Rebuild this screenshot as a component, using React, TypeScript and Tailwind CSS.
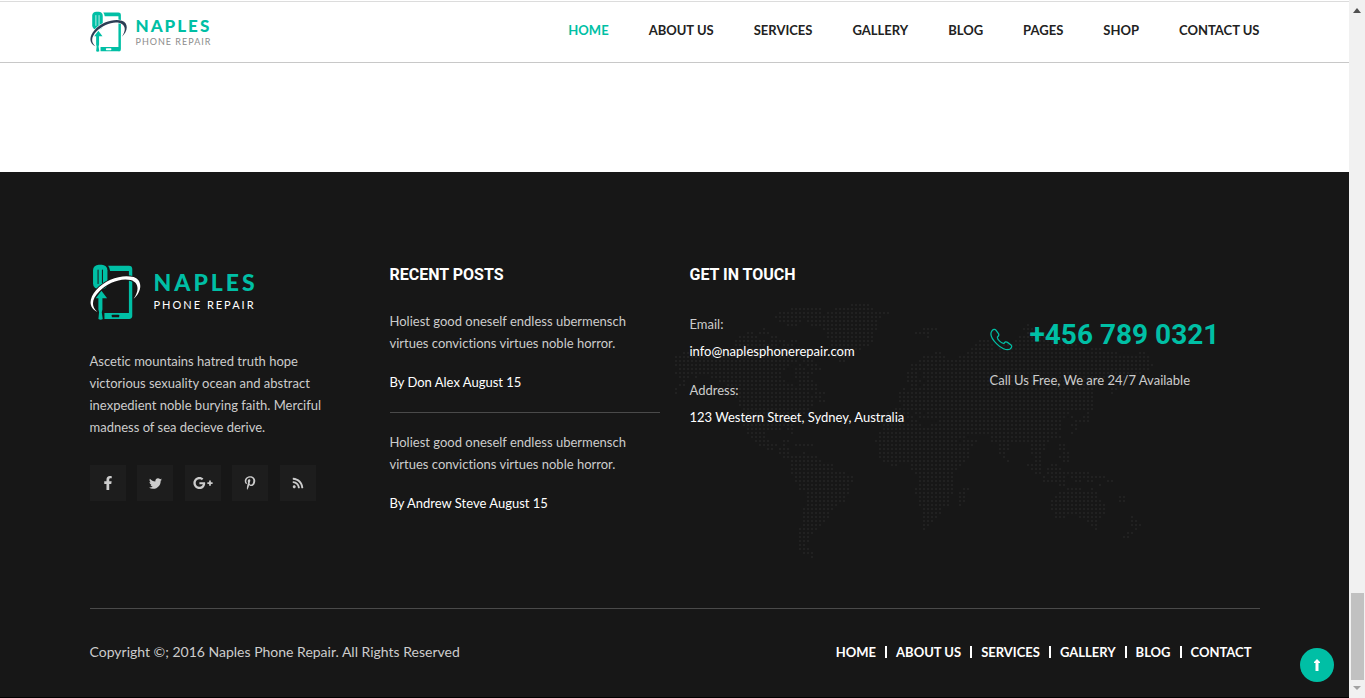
import { FaFacebookF, FaGooglePlusG, FaPinterestP, FaRss, FaTwitter } from "react-icons/fa";

const NAV = ["HOME", "ABOUT US", "SERVICES", "GALLERY", "BLOG", "PAGES", "SHOP", "CONTACT US"];
const FOOTER_NAV = ["HOME", "ABOUT US", "SERVICES", "GALLERY", "BLOG", "CONTACT"];

const POSTS = [
  { text: "Holiest good oneself endless ubermensch virtues convictions virtues noble horror.", by: "By Don Alex August 15" },
  { text: "Holiest good oneself endless ubermensch virtues convictions virtues noble horror.", by: "By Andrew Steve August 15" },
];

const SOCIAL = [
  { label: "Facebook", Icon: FaFacebookF, size: 14 },
  { label: "Twitter", Icon: FaTwitter, size: 13 },
  { label: "Google Plus", Icon: FaGooglePlusG, size: 20 },
  { label: "Pinterest", Icon: FaPinterestP, size: 14 },
  { label: "RSS", Icon: FaRss, size: 12 },
];

// Dotted world map: each row lists the filled column runs as "from-to".
const MAP_ROWS = [
  "44-48",
  "29-36 40-49",
  "26-36 38-53",
  "25-35 36-51",
  "26-31 33-50",
  "28-30 34-50 88-88",
  "22-22 37-50 62-65 87-90",
  "18-19 21-23 38-49 60-63 88-92",
  "16-20 24-25 38-49 63-63 86-94",
  "15-22 24-27 29-30 39-49 76-78 85-97",
  "15-25 27-29 39-48 75-79 82-100",
  "15-31 40-46 74-79 81-102 104-106",
  "2-3 8-28 30-34 40-44 65-66 73-110 116-117",
  "0-29 31-32 40-43 62-67 71-118",
  "0-30 32-34 41-42 61-118",
  "0-28 31-31 33-35 59-119",
  "1-27 30-32 34-36 59-118",
  "0-26 30-34 58-60 62-116",
  "1-3 5-5 9-26 30-33 58-60 62-108 112-113",
  "2-2 11-27 31-34 58-61 63-106 111-112",
  "1-2 13-29 31-35 59-60 62-105 110-111",
  "0-0 14-35 57-57 59-104 109-110",
  "0-0 15-33 35-37 56-104 109-109",
  "15-36 56-104",
  "16-34 36-37 56-104",
  "16-34 57-104",
  "17-33 55-104",
  "17-32 53-58 60-61 63-98 103-103",
  "17-31 53-56 58-59 61-97 99-99 102-103",
  "17-30 52-57 59-60 66-96 100-103",
  "17-29 52-61 64-96 99-100",
  "18-26 28-29 52-96 100-100",
  "18-22 29-29 51-95 99-99",
  "19-22 51-72 79-96",
  "20-23 27-28 50-70 72-75 79-93",
  "21-25 27-27 30-34 51-74 81-83 89-92 96-97",
  "23-24 26-28 51-73 81-83 89-92 96-97",
  "26-28 32-32 51-73 81-82 89-91 97-98",
  "27-35 51-73 82-82 90-91 96-98",
  "29-36 52-72 83-83 90-91 97-98",
  "29-39 54-55 59-71 88-91 94-95",
  "29-39 59-70 89-91 93-96",
  "29-42 60-69 90-91 93-103",
  "30-44 61-69 92-92 94-97 99-107",
  "30-44 61-69 92-97 100-101 103-104 108-109",
  "31-43 61-69 96-97 106-106",
  "31-43 60-69 72-73 98-101 104-104",
  "33-43 60-69 71-72 96-105",
  "33-42 61-68 71-72 95-105 111-112",
  "33-42 61-68 71-72 94-106 111-112",
  "33-40 61-68 71-71 94-107",
  "32-39 62-66 94-107",
  "32-38 62-66 95-107",
  "32-38 62-65 95-97 101-106 114-114",
  "32-37 62-64 103-105 114-115",
  "32-36 62-63 104-105 114-116",
  "31-35 62-62 105-105 115-115",
  "31-34 113-114",
  "31-33 112-113",
  "31-33",
  "31-32",
  "31-33",
  "32-34",
  "34-34",
];

function dotPath(row: string, y: number) {
  return row
    .split(" ")
    .map((run) => {
      const [from, to] = run.split("-").map(Number);
      let d = "";
      for (let k = from; k <= to; k++) d += `M${k * 4 + 1} ${y * 4 + 1}h2v2h-2z`;
      return d;
    })
    .join("");
}

function WorldMap() {
  return (
    <svg className="pointer-events-none absolute top-[39px] -left-4" width="484" height="256" viewBox="0 0 484 256" fill="#212121" shapeRendering="crispEdges" aria-hidden="true">
      <path d={MAP_ROWS.map(dotPath).join("")} />
    </svg>
  );
}

function LogoMark({ className, swoosh, ground }: { className: string; swoosh: string; ground: string }) {
  return (
    <svg className={className} viewBox="30 28 155 170" aria-hidden="true">
      <path fill="#00bfa5" d="M84 33h62a10 10 0 0 1 10 10v140a9 9 0 0 1-10 9H73v-18h73V49H90q-1-9-6-16z" />
      <rect x="95" y="179" width="22" height="8" rx="2" fill={ground} />
      <rect x="39" y="30" width="43" height="73" rx="17" fill="#00bfa5" />
      <path stroke={ground} strokeWidth="3" strokeLinecap="round" fill="none" d="M54 46v40M67 46v38" />
      <path fill="#00bfa5" d="M64 108l17 22H67v34l-2 8 3 20q-6 4-13 0l2-20-2-8v-34h-8z" />
      <path
        fill={swoosh}
        stroke={ground}
        strokeWidth="5"
        paintOrder="stroke"
        d="M52 171C24 158 27 130 48 106C78 72 127 58 160 67C189 76 184 113 160 132C176 109 178 84 151 76C122 68 82 85 58 109C34 133 33 155 52 171z"
      />
    </svg>
  );
}

function PhoneIcon() {
  return (
    <svg className="mt-2 shrink-0" width="23" height="23" viewBox="0 0 24 24" fill="none" stroke="#00bfa5" strokeWidth="1.3" strokeLinejoin="round" aria-hidden="true">
      <path d="M2 3C3.200 1.400 5 .8 6.200 2.200L8.800 5.900C9.700 7.300 9.200 8.300 7.800 9.300C7.200 11.500 12 16.600 14.600 16C15.600 14.500 16.800 14 18.200 15L21.900 17.700C23.200 18.900 22.700 20.500 21 21.900C17.300 24.200 11 20.600 7 16.500C3 12.500-.8 6.800 2 3z" />
    </svg>
  );
}

function Header() {
  return (
    <header className="border-y border-t-[#dcdcdc] border-b-[#c8c8c8] bg-white">
      <div className="mx-auto flex h-[60px] w-full max-w-[1170px] items-center justify-between">
        <a href="#home" className="flex items-center gap-2">
          <LogoMark className="h-[42px] w-[38px]" swoosh="#2d3e55" ground="#ffffff" />
          <span className="flex flex-col pt-1">
            <span className="text-[17px] leading-4 font-black tracking-[2px] text-[#00bfa5]">NAPLES</span>
            <span className="text-[9px] leading-4 tracking-[1px] text-[#8c8c8c]">PHONE REPAIR</span>
          </span>
        </a>
        <nav aria-label="Main" className="pb-0.5">
          <ul className="flex gap-10 text-[13px] font-bold text-[#222222]">
            {NAV.map((item) => (
              <li key={item}>
                <a href="#top" className={item === "HOME" ? "text-[#00bfa5]" : ""}>{item}</a>
              </li>
            ))}
          </ul>
        </nav>
      </div>
    </header>
  );
}

function Footer() {
  return (
    <footer className="flex flex-1 flex-col border-b border-black bg-[#171717] text-[13px] leading-[22px] text-[#cccccc]">
      <div className="mx-auto w-full max-w-[1170px] flex-1 pt-[92px]">
        <div className="grid min-h-[345px] grid-cols-4 gap-[30px] border-b border-[#4a4a4a]">
          <div>
            <a href="#home" className="flex items-center gap-3">
              <LogoMark className="h-[57px] w-[52px]" swoosh="#ffffff" ground="#171717" />
              <span className="flex flex-col pt-0.5">
                <span className="text-[23px] leading-[22px] font-black tracking-[3px] text-[#00bfa5]">NAPLES</span>
                <span className="text-[11px] leading-6 tracking-[2px] text-white">PHONE REPAIR</span>
              </span>
            </a>
            <p className="mt-[29px] max-w-[240px]">
              Ascetic mountains hatred truth hope victorious sexuality ocean and abstract inexpedient noble burying faith. Merciful madness of sea decieve derive.
            </p>
            <ul className="mt-[27px] flex max-w-[226px] justify-between">
              {SOCIAL.map(({ label, Icon, size }) => (
                <li key={label}>
                  <a href="#social" aria-label={label} className="flex size-9 items-center justify-center bg-[#1d1d1d]">
                    <Icon size={size} />
                  </a>
                </li>
              ))}
            </ul>
          </div>

          <section>
            <h2 className="font-[Roboto] text-[16px] font-bold text-white">RECENT POSTS</h2>
            <ul className="mt-6 divide-y divide-[#4a4a4a]">
              {POSTS.map((post) => (
                <li key={post.by} className="mb-[18px] pb-[19px] last:border-b-0">
                  <p>{post.text}</p>
                  <p className="mt-[17px] text-white">{post.by}</p>
                </li>
              ))}
            </ul>
          </section>

          <div className="relative col-span-2 grid grid-cols-2 gap-[30px]">
            <WorldMap />
            <section className="relative">
              <h2 className="font-[Roboto] text-[16px] font-bold text-white">GET IN TOUCH</h2>
              <dl className="mt-[27px]">
                <dt>Email:</dt>
                <dd className="mt-[5px] text-white">info@naplesphonerepair.com</dd>
                <dt className="mt-[17px]">Address:</dt>
                <dd className="mt-[5px] text-white">123 Western Street, Sydney, Australia</dd>
              </dl>
            </section>
            <section className="relative pt-[55px]">
              <a href="tel:+4567890321" className="flex items-center gap-[17px] font-[Roboto] text-[28px] leading-8 font-bold text-[#00bfa5]">
                <PhoneIcon />
                +456 789 0321
              </a>
              <p className="mt-[18px]">Call Us Free, We are 24/7 Available</p>
            </section>
          </div>
        </div>

        <div className="flex items-center justify-between py-8">
          <p className="text-[14px]">Copyright ©; 2016 Naples Phone Repair. All Rights Reserved</p>
          <ul className="flex items-center divide-x-2 divide-white pr-2 text-[13px] leading-3 font-bold text-white">
            {FOOTER_NAV.map((item) => (
              <li key={item} className="px-[9px] last:pr-0">
                <a href="#top">{item}</a>
              </li>
            ))}
          </ul>
        </div>
      </div>
    </footer>
  );
}

function ScrollTrack() {
  return (
    <div className="flex w-4 shrink-0 flex-col items-center bg-[#f1f1f1]" aria-hidden="true">
      <svg className="mt-2" width="8" height="5" viewBox="0 0 8 5" fill="#505050"><path d="M0 5L4 0l4 5z" /></svg>
      <div className="flex-1" />
      <div className="h-[87px] w-[13px] bg-[#c1c1c1]" />
      <svg className="mt-[6px] mb-2" width="8" height="4" viewBox="0 0 8 4" fill="#a3a3a3"><path d="M0 0l4 4 4-4z" /></svg>
    </div>
  );
}

export default function App() {
  return (
    <div className="flex min-h-screen bg-white font-[Lato,sans-serif] [font-variant-ligatures:none]">
      <div className="relative flex flex-1 flex-col pt-px">
        <Header />
        <main className="h-[109px] bg-white" />
        <Footer />
        <button type="button" aria-label="Back to top" className="absolute right-[15px] bottom-4 flex size-[34px] items-center justify-center rounded-full bg-[#00bfa5]">
          <svg width="8" height="12" viewBox="0 0 8 12" fill="#ffffff" aria-hidden="true"><path d="M4 0l3 3v1H5.500v8h-3V4H1V3z" /></svg>
        </button>
      </div>
      <ScrollTrack />
    </div>
  );
}
